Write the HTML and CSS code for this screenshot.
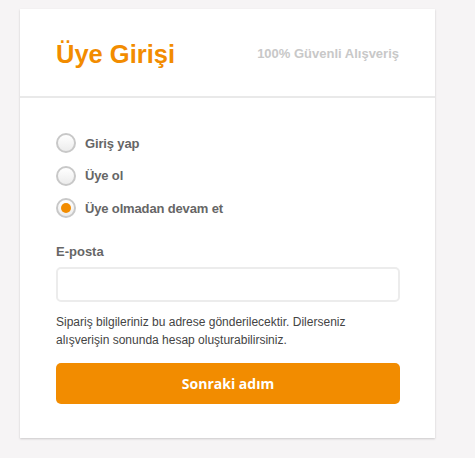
FILE: index.html
```html
<!DOCTYPE html>
<html lang="tr">
<head>
<meta charset="utf-8">
<title>Üye Girişi</title>
<link rel="stylesheet" href="styles.css">
</head>
<body>
<div class="card">
  <div class="card-head">
    <h1 class="title">Üye Girişi</h1>
    <span class="secure">100% Güvenli Alışveriş</span>
  </div>
  <div class="card-body">
    <div class="options">
      <label class="option"><span class="radio"></span><span class="opt-text">Giriş yap</span></label>
      <label class="option"><span class="radio"></span><span class="opt-text">Üye ol</span></label>
      <label class="option"><span class="radio checked"></span><span class="opt-text">Üye olmadan devam et</span></label>
    </div>
    <div class="field-label">E-posta</div>
    <div class="input"></div>
    <p class="help">Sipariş bilgileriniz bu adrese gönderilecektir. Dilerseniz alışverişin sonunda hesap oluşturabilirsiniz.</p>
    <div class="button">Sonraki adım</div>
  </div>
</div>
</body>
</html>
```

FILE: styles.css
```css
html, body {
  margin: 0;
  padding: 0;
}
body {
  background: #f6f4f5;
  font-family: "Liberation Sans", Arial, sans-serif;
  height: 458px;
  overflow: hidden;
}
.card {
  margin: 9px 0 0 20px;
  width: 415px;
  background: #fff;
  box-shadow: 0 1px 2px rgba(0,0,0,0.18);
}
.card-head {
  height: 87px;
  border-bottom: 2px solid #e9e9e9;
  display: flex;
  align-items: center;
  justify-content: space-between;
  padding: 0 36px 0 36px;
}
.title {
  margin: 0;
  font-size: 25.5px;
  font-weight: bold;
  color: #f28c00;
  line-height: 30px;
  padding-top: 2px;
}
.secure {
  font-size: 13px;
  font-weight: bold;
  color: #c8c8c8;
  padding-top: 2px;
}
.card-body {
  padding: 35px 35px 34px 36px;
}
.options {
  display: flex;
  flex-direction: column;
  gap: 12.5px;
}
.option {
  display: flex;
  align-items: center;
  height: 20px;
}
.radio {
  width: 20px;
  height: 20px;
  box-sizing: border-box;
  border: 2px solid #c8c8c8;
  border-radius: 50%;
  background: linear-gradient(#ffffff, #ececec);
  display: flex;
  align-items: center;
  justify-content: center;
}
.radio.checked::after {
  content: "";
  width: 10px;
  height: 10px;
  border-radius: 50%;
  background: #f28c00;
}
.opt-text {
  margin-left: 9px;
  font-size: 13px;
  font-weight: bold;
  color: #666;
  letter-spacing: -0.15px;
}
.field-label {
  margin-top: 26px;
  font-size: 13px;
  line-height: 16px;
  font-weight: bold;
  color: #666;
}
.input {
  margin-top: 7px;
  height: 35px;
  box-sizing: border-box;
  border: 2px solid #ececec;
  border-radius: 5px;
}
.help {
  margin: 11px 0 0 0;
  font-size: 12px;
  line-height: 18px;
  color: #444;
  width: 300px;
}
.button {
  margin-top: 14px;
  height: 41px;
  border-radius: 5px;
  background: #f28c00;
  color: #fff;
  font-family: "Open Sans", sans-serif;
  font-weight: bold;
  font-size: 14px;
  display: flex;
  align-items: center;
  justify-content: center;
}
```
